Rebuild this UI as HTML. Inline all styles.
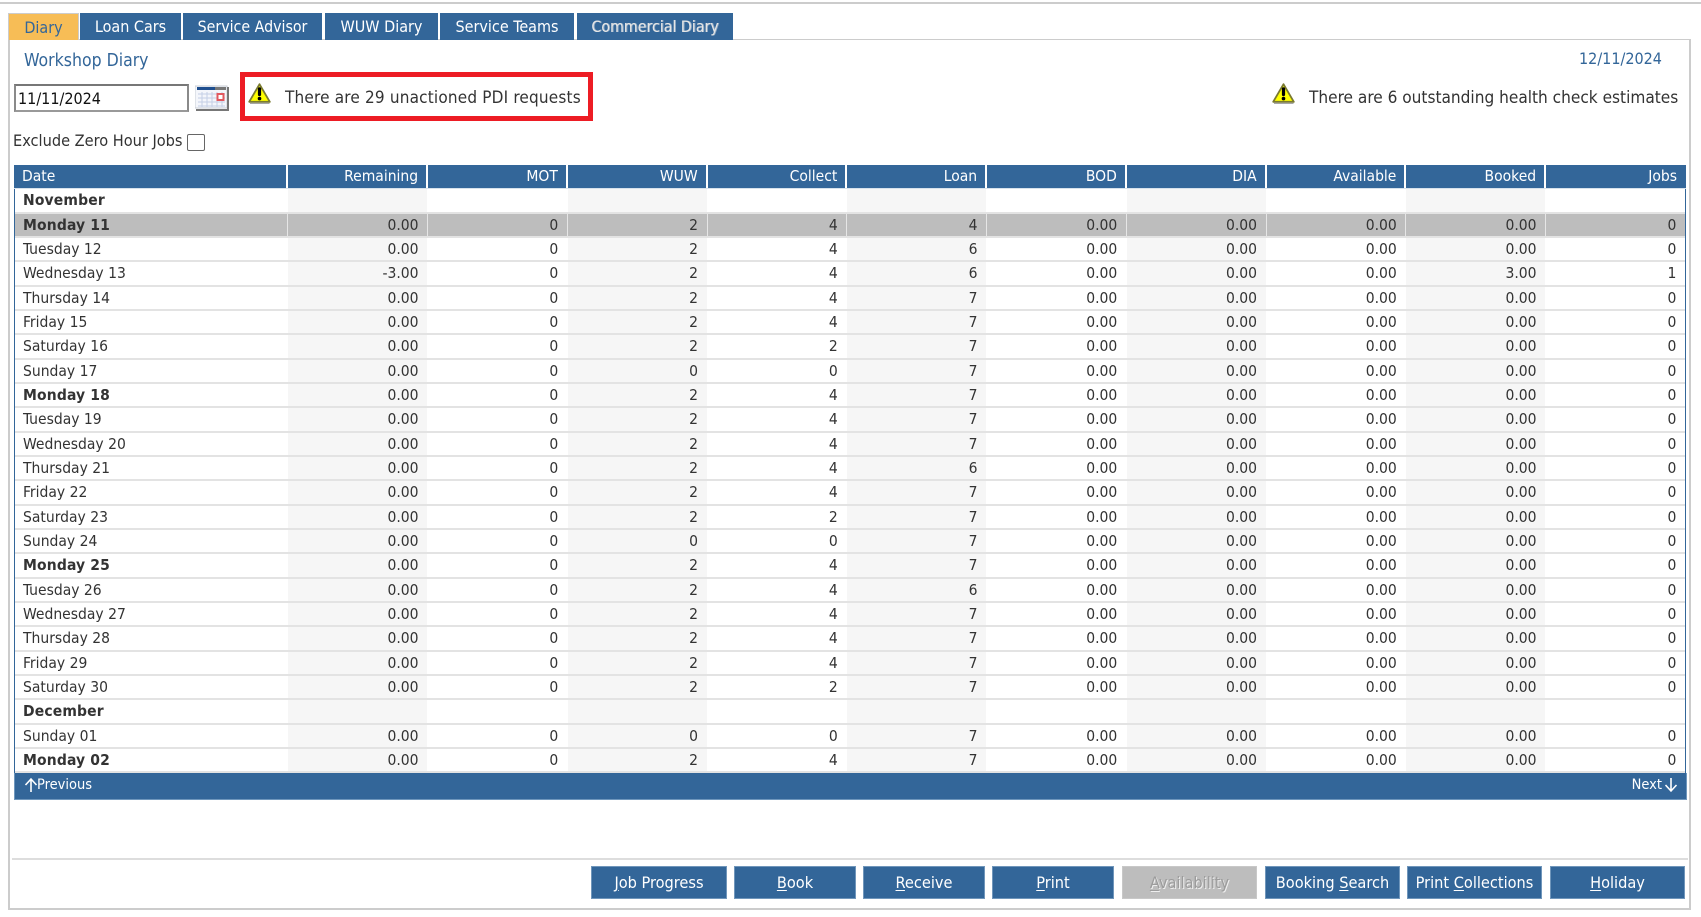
<!DOCTYPE html>
<html lang="en"><head><meta charset="utf-8"><title>Workshop Diary</title>
<style>
*{box-sizing:border-box}
html,body{margin:0;padding:0;background:#fff}
body{width:1701px;height:917px;position:relative;overflow:hidden;font-family:"DejaVu Sans Condensed","Liberation Sans",sans-serif;font-stretch:condensed;font-size:15.5px;color:#333}
.a{position:absolute;white-space:nowrap}
.band{left:0;top:2px;width:1701px;height:2px;background:#ccc}
.panel{left:8px;top:39px;width:1683px;height:871px;border:1px solid #ccc;border-width:1px 2px 2px 2px}
.tab{top:13px;height:27px;background:#336699;color:#fff;text-align:center;line-height:28px;font-size:16px}
.tbl{left:14px;top:165px;width:1672px}
.hd,.r{display:flex}
.hd{height:24px;background:#336699;color:#fff;line-height:23px;border-bottom:1px solid #d7e2ec;background-clip:padding-box}
.hd span{border-right:2px solid #fff}
.hd span:last-child,.r span:last-child{border-right:0}
.hd span,.r span{display:block;width:139.75px;padding-right:8px;text-align:right;flex:none;white-space:nowrap}
.r span{padding-right:8.6px}
.hd span:first-child{width:274.4px;text-align:left;padding:0 0 0 8px}
.r span:first-child{width:273.4px;text-align:left;padding:0 0 0 8px}
.hd span:last-child{width:139.85px;padding-right:9px}
.r span:last-child{width:138.85px}
.rows{border-left:1px solid #336699;border-right:1px solid #336699;padding-top:.4px}
.r{height:24.33px;line-height:23px;border-bottom:2px solid #e3e3e3}
.r span{border-right:1px solid #fff;height:22.33px}
.r span:nth-child(even){background:#f6f6f6}
.m span:first-child{font-weight:bold;letter-spacing:.15px}
.sel,.sel span,.sel span:nth-child(even){background:#bdbdbd}
.sel span{border-right-color:#e6e6e6}
.foot{left:14px;top:773px;width:1673px;height:27px;background:#336699;color:#fff;font-size:14.5px;line-height:25px;border:1px solid #6f97bd;border-top:0}
.btn{top:866px;height:33px;background:#336699;border:1px solid #7096bb;color:#fff;text-align:center;line-height:31px;font-size:16.2px}
.btn u{text-underline-offset:2px}
.dis{background:#bdbdbd;border-color:#c8c8c8;color:#9c9c9c;text-shadow:1px 1px 0 #eee}
</style></head><body>
<div class="a band"></div>
<div class="a panel"></div>

<div class="a tab" style="left:8px;width:71px;background:#f7bd56;color:#336699;border:1px solid #ccc;border-bottom:0">Diary</div>
<div class="a tab" style="left:80px;width:101px">Loan Cars</div>
<div class="a tab" style="left:183px;width:139px;font-size:15.8px">Service Advisor</div>
<div class="a tab" style="left:325px;width:113px">WUW Diary</div>
<div class="a tab" style="left:440px;width:134px">Service Teams</div>
<div class="a tab" style="left:577px;width:156px;color:#e6e6e6;text-shadow:1px 0 0 #8fa9c4;font-size:15.8px">Commercial Diary</div>

<div class="a" style="left:24px;top:50px;font-size:17.5px;line-height:22px;color:#336699">Workshop Diary</div>
<div class="a" style="left:1579px;top:49px;font-size:16px;line-height:20px;color:#336699">12/11/2024</div>

<div class="a" style="left:14px;top:84px;width:175px;height:28px;border:2px solid #8a8a8a;border-top-color:#777;border-bottom-color:#999;color:#111;font-size:16px;line-height:25px;padding-left:2px">11/11/2024</div>
<svg class="a" style="left:195px;top:84px" width="34" height="27" viewBox="0 0 34 27">
<rect x="0" y="2" width="32" height="22" fill="#f4f6fb" stroke="#c9cdd6"/>
<rect x="2" y="3" width="18" height="3" fill="#1f4f8f"/><rect x="20" y="3" width="11" height="3" fill="#777"/>
<path d="M3 10H30M3 14H30M3 18H30M3 22H30M7 8V23M12 8V23M17 8V23M22 8V23M27 8V23" stroke="#c4cfe6" stroke-width="1"/>
<rect x="22.5" y="10" width="6" height="6" fill="#fff" stroke="#e2585f" stroke-width="2"/>
<path d="M33 3V26H1" fill="none" stroke="#777" stroke-width="2"/>
</svg>

<div class="a" style="left:240px;top:72px;width:353px;height:49px;border:5px solid #ed1c24"></div>
<svg class="a" style="left:248px;top:83px" width="23" height="21" viewBox="0 0 23 21">
<path d="M11.5 1.2L21.8 18.8H1.2Z" fill="#ffff00" stroke="#7a7a30" stroke-width="1.8" stroke-linejoin="round"/>
<path d="M2 20.3H21.5" stroke="#999" stroke-width="1.2"/>
<path d="M11.5 5.8V11.5" stroke="#000" stroke-width="3.2" stroke-linecap="round"/><circle cx="11.5" cy="15.6" r="1.8" fill="#000"/>
</svg>
<div class="a" style="left:285px;top:87px;font-size:17px;line-height:22px;letter-spacing:.18px">There are 29 unactioned PDI requests</div>

<svg class="a" style="left:1272px;top:83px" width="23" height="21" viewBox="0 0 23 21">
<path d="M11.5 1.2L21.8 18.8H1.2Z" fill="#ffff00" stroke="#7a7a30" stroke-width="1.8" stroke-linejoin="round"/>
<path d="M2 20.3H21.5" stroke="#999" stroke-width="1.2"/>
<path d="M11.5 5.8V11.5" stroke="#000" stroke-width="3.2" stroke-linecap="round"/><circle cx="11.5" cy="15.6" r="1.8" fill="#000"/>
</svg>
<div class="a" style="left:1309px;top:87px;font-size:17.1px;line-height:22px">There are 6 outstanding health check estimates</div>

<div class="a" style="left:13px;top:130px;font-size:16.2px;line-height:21px">Exclude Zero Hour Jobs</div>
<div class="a" style="left:187px;top:134px;width:18px;height:17px;border:1px solid #666;border-radius:2px;background:#fff"></div>

<div class="a tbl">
<div class="hd"><span>Date</span><span>Remaining</span><span>MOT</span><span>WUW</span><span>Collect</span><span>Loan</span><span>BOD</span><span>DIA</span><span>Available</span><span>Booked</span><span>Jobs</span></div>
<div class="rows">
<div class="r m"><span>November</span><span></span><span></span><span></span><span></span><span></span><span></span><span></span><span></span><span></span><span></span></div>
<div class="r m sel"><span>Monday 11</span><span>0.00</span><span>0</span><span>2</span><span>4</span><span>4</span><span>0.00</span><span>0.00</span><span>0.00</span><span>0.00</span><span>0</span></div>
<div class="r"><span>Tuesday 12</span><span>0.00</span><span>0</span><span>2</span><span>4</span><span>6</span><span>0.00</span><span>0.00</span><span>0.00</span><span>0.00</span><span>0</span></div>
<div class="r"><span>Wednesday 13</span><span>-3.00</span><span>0</span><span>2</span><span>4</span><span>6</span><span>0.00</span><span>0.00</span><span>0.00</span><span>3.00</span><span>1</span></div>
<div class="r"><span>Thursday 14</span><span>0.00</span><span>0</span><span>2</span><span>4</span><span>7</span><span>0.00</span><span>0.00</span><span>0.00</span><span>0.00</span><span>0</span></div>
<div class="r"><span>Friday 15</span><span>0.00</span><span>0</span><span>2</span><span>4</span><span>7</span><span>0.00</span><span>0.00</span><span>0.00</span><span>0.00</span><span>0</span></div>
<div class="r"><span>Saturday 16</span><span>0.00</span><span>0</span><span>2</span><span>2</span><span>7</span><span>0.00</span><span>0.00</span><span>0.00</span><span>0.00</span><span>0</span></div>
<div class="r"><span>Sunday 17</span><span>0.00</span><span>0</span><span>0</span><span>0</span><span>7</span><span>0.00</span><span>0.00</span><span>0.00</span><span>0.00</span><span>0</span></div>
<div class="r m"><span>Monday 18</span><span>0.00</span><span>0</span><span>2</span><span>4</span><span>7</span><span>0.00</span><span>0.00</span><span>0.00</span><span>0.00</span><span>0</span></div>
<div class="r"><span>Tuesday 19</span><span>0.00</span><span>0</span><span>2</span><span>4</span><span>7</span><span>0.00</span><span>0.00</span><span>0.00</span><span>0.00</span><span>0</span></div>
<div class="r"><span>Wednesday 20</span><span>0.00</span><span>0</span><span>2</span><span>4</span><span>7</span><span>0.00</span><span>0.00</span><span>0.00</span><span>0.00</span><span>0</span></div>
<div class="r"><span>Thursday 21</span><span>0.00</span><span>0</span><span>2</span><span>4</span><span>6</span><span>0.00</span><span>0.00</span><span>0.00</span><span>0.00</span><span>0</span></div>
<div class="r"><span>Friday 22</span><span>0.00</span><span>0</span><span>2</span><span>4</span><span>7</span><span>0.00</span><span>0.00</span><span>0.00</span><span>0.00</span><span>0</span></div>
<div class="r"><span>Saturday 23</span><span>0.00</span><span>0</span><span>2</span><span>2</span><span>7</span><span>0.00</span><span>0.00</span><span>0.00</span><span>0.00</span><span>0</span></div>
<div class="r"><span>Sunday 24</span><span>0.00</span><span>0</span><span>0</span><span>0</span><span>7</span><span>0.00</span><span>0.00</span><span>0.00</span><span>0.00</span><span>0</span></div>
<div class="r m"><span>Monday 25</span><span>0.00</span><span>0</span><span>2</span><span>4</span><span>7</span><span>0.00</span><span>0.00</span><span>0.00</span><span>0.00</span><span>0</span></div>
<div class="r"><span>Tuesday 26</span><span>0.00</span><span>0</span><span>2</span><span>4</span><span>6</span><span>0.00</span><span>0.00</span><span>0.00</span><span>0.00</span><span>0</span></div>
<div class="r"><span>Wednesday 27</span><span>0.00</span><span>0</span><span>2</span><span>4</span><span>7</span><span>0.00</span><span>0.00</span><span>0.00</span><span>0.00</span><span>0</span></div>
<div class="r"><span>Thursday 28</span><span>0.00</span><span>0</span><span>2</span><span>4</span><span>7</span><span>0.00</span><span>0.00</span><span>0.00</span><span>0.00</span><span>0</span></div>
<div class="r"><span>Friday 29</span><span>0.00</span><span>0</span><span>2</span><span>4</span><span>7</span><span>0.00</span><span>0.00</span><span>0.00</span><span>0.00</span><span>0</span></div>
<div class="r"><span>Saturday 30</span><span>0.00</span><span>0</span><span>2</span><span>2</span><span>7</span><span>0.00</span><span>0.00</span><span>0.00</span><span>0.00</span><span>0</span></div>
<div class="r m"><span>December</span><span></span><span></span><span></span><span></span><span></span><span></span><span></span><span></span><span></span><span></span></div>
<div class="r"><span>Sunday 01</span><span>0.00</span><span>0</span><span>0</span><span>0</span><span>7</span><span>0.00</span><span>0.00</span><span>0.00</span><span>0.00</span><span>0</span></div>
<div class="r m"><span>Monday 02</span><span>0.00</span><span>0</span><span>2</span><span>4</span><span>7</span><span>0.00</span><span>0.00</span><span>0.00</span><span>0.00</span><span>0</span></div>
</div></div>

<div class="a foot">
<svg class="a" style="left:9px;top:4px" width="14" height="16" viewBox="0 0 14 16"><path d="M7 15V2M1.5 8L7 2L12.5 8" fill="none" stroke="#fff" stroke-width="1.6"/></svg>
<span class="a" style="left:22px;top:0">Previous</span>
<span class="a" style="right:24px;top:0">Next</span>
<svg class="a" style="right:8px;top:4px" width="14" height="16" viewBox="0 0 14 16"><path d="M7 1V14M1.5 8L7 14L12.5 8" fill="none" stroke="#fff" stroke-width="1.6"/></svg>
</div>

<div class="a" style="left:12px;top:858px;width:1676px;height:2px;background:#ddd"></div>
<div class="a btn" style="left:591px;width:136px"><u>J</u>ob Progress</div>
<div class="a btn" style="left:734px;width:122px"><u>B</u>ook</div>
<div class="a btn" style="left:863px;width:122px"><u>R</u>eceive</div>
<div class="a btn" style="left:992px;width:122px"><u>P</u>rint</div>
<div class="a btn dis" style="left:1122px;width:135px"><u>A</u>vailability</div>
<div class="a btn" style="left:1265px;width:135px">Booking <u>S</u>earch</div>
<div class="a btn" style="left:1407px;width:135px">Print <u>C</u>ollections</div>
<div class="a btn" style="left:1550px;width:135px"><u>H</u>oliday</div>
</body></html>
